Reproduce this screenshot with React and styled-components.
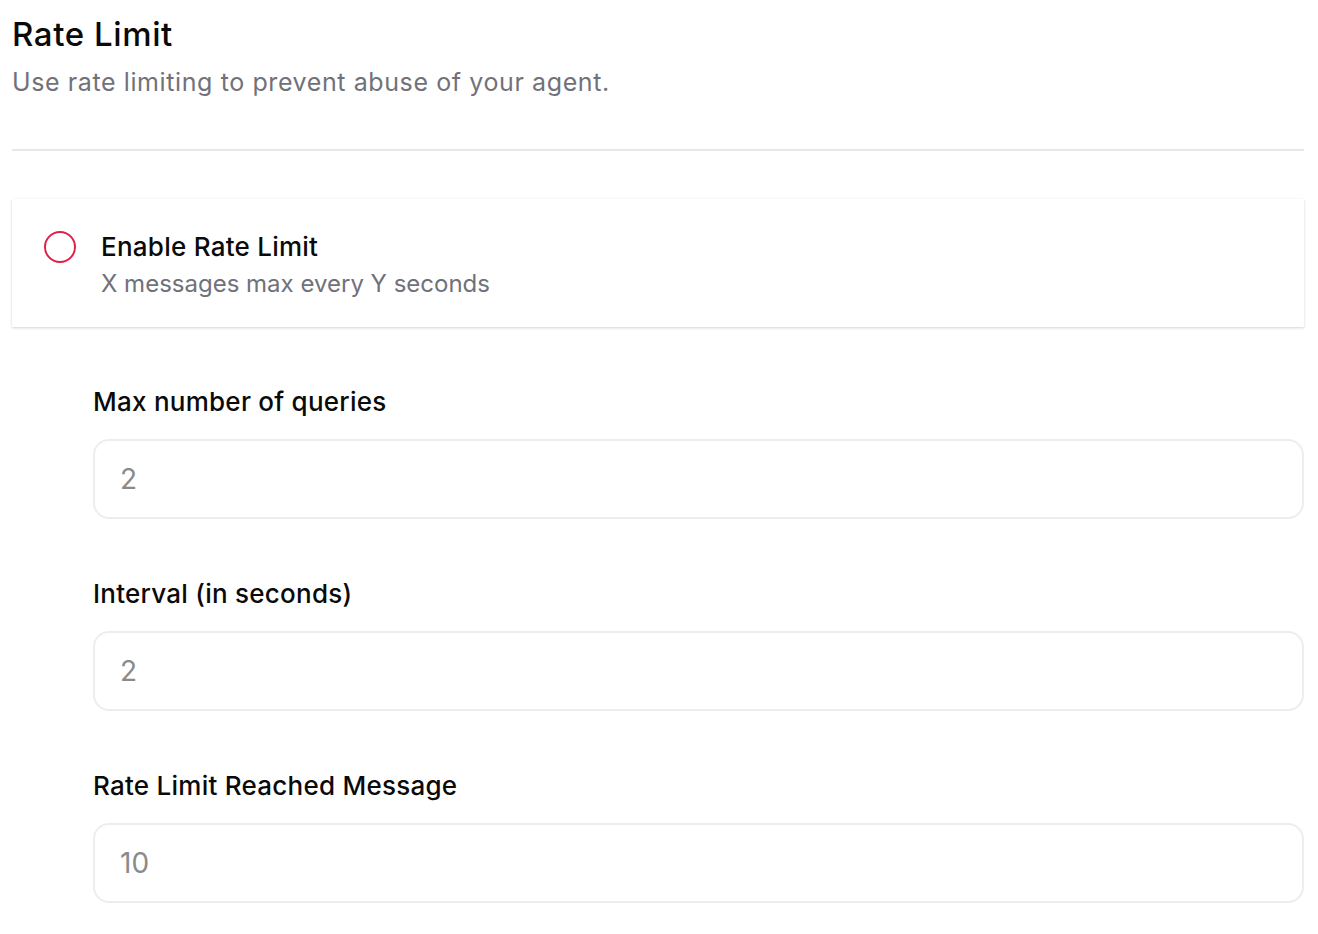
import React from "react";
import styled, { createGlobalStyle } from "styled-components";

const Global = createGlobalStyle`
  html, body { margin: 0; padding: 0; background: #ffffff; }
  body { font-family: Inter, "Noto Sans", sans-serif; color: #0a0a0a; }
  * { box-sizing: border-box; }
`;

const Page = styled.div`
  padding: 14px 14px 30px 12px;
  display: flex;
  flex-direction: column;
`;

const Header = styled.header`
  display: flex;
  flex-direction: column;
  gap: 10px;
  padding-bottom: 49px;
  border-bottom: 2px solid #e7e7e7;
`;

const Title = styled.h1`
  margin: 0;
  font-size: 33px;
  line-height: 40px;
  font-weight: 500;
  color: #0a0a0a;
  letter-spacing: 0.6px;
`;

const Subtitle = styled.p`
  margin: 0;
  font-size: 25px;
  line-height: 36px;
  font-weight: 400;
  color: #71717a;
  letter-spacing: 0.6px;
`;

const Card = styled.section`
  margin-top: 48px;
  background: #ffffff;
  box-shadow: 0 1px 3px rgba(0, 0, 0, 0.12), 0 1px 2px rgba(0, 0, 0, 0.06);
  padding: 30px 32px 26px 32px;
  display: flex;
  align-items: flex-start;
  gap: 25px;
`;

const Radio = styled.span`
  flex: none;
  width: 32px;
  height: 32px;
  margin-top: 2px;
  border-radius: 50%;
  border: 2px solid #e11d48;
`;

const CardText = styled.div`
  display: flex;
  flex-direction: column;
  gap: 2px;
`;

const CardTitle = styled.div`
  font-size: 26px;
  line-height: 36px;
  font-weight: 500;
  color: #0a0a0a;
  letter-spacing: 0.25px;
`;

const CardDesc = styled.div`
  font-size: 24px;
  line-height: 34px;
  color: #71717a;
`;

const Fields = styled.div`
  margin-top: 58px;
  padding-left: 81px;
  display: flex;
  flex-direction: column;
  gap: 58px;
`;

const Field = styled.label`
  display: flex;
  flex-direction: column;
  gap: 20px;
`;

const Label = styled.span`
  font-size: 26px;
  line-height: 34px;
  font-weight: 500;
  color: #0a0a0a;
  letter-spacing: 0.25px;
`;

const Input = styled.input`
  display: block;
  width: 100%;
  height: 80px;
  margin: 0;
  border: 2px solid #ededed;
  border-radius: 16px;
  padding: 0 25px;
  font-family: Inter, "Noto Sans", sans-serif;
  font-size: 28px;
  color: #737373;
  background: #ffffff;
  outline: none;
  &::placeholder { color: #8a8a8a; }
`;

const fields = [
  { label: "Max number of queries", value: "2" },
  { label: "Interval (in seconds)", value: "2" },
  { label: "Rate Limit Reached Message", value: "10" },
];

export default function App() {
  return (
    <>
      <Global />
      <Page>
        <Header>
          <Title>Rate Limit</Title>
          <Subtitle>Use rate limiting to prevent abuse of your agent.</Subtitle>
        </Header>
        <Card>
          <Radio />
          <CardText>
            <CardTitle>Enable Rate Limit</CardTitle>
            <CardDesc>X messages max every Y seconds</CardDesc>
          </CardText>
        </Card>
        <Fields>
          {fields.map((f) => (
            <Field key={f.label}>
              <Label>{f.label}</Label>
              <Input placeholder={f.value} readOnly />
            </Field>
          ))}
        </Fields>
      </Page>
    </>
  );
}
